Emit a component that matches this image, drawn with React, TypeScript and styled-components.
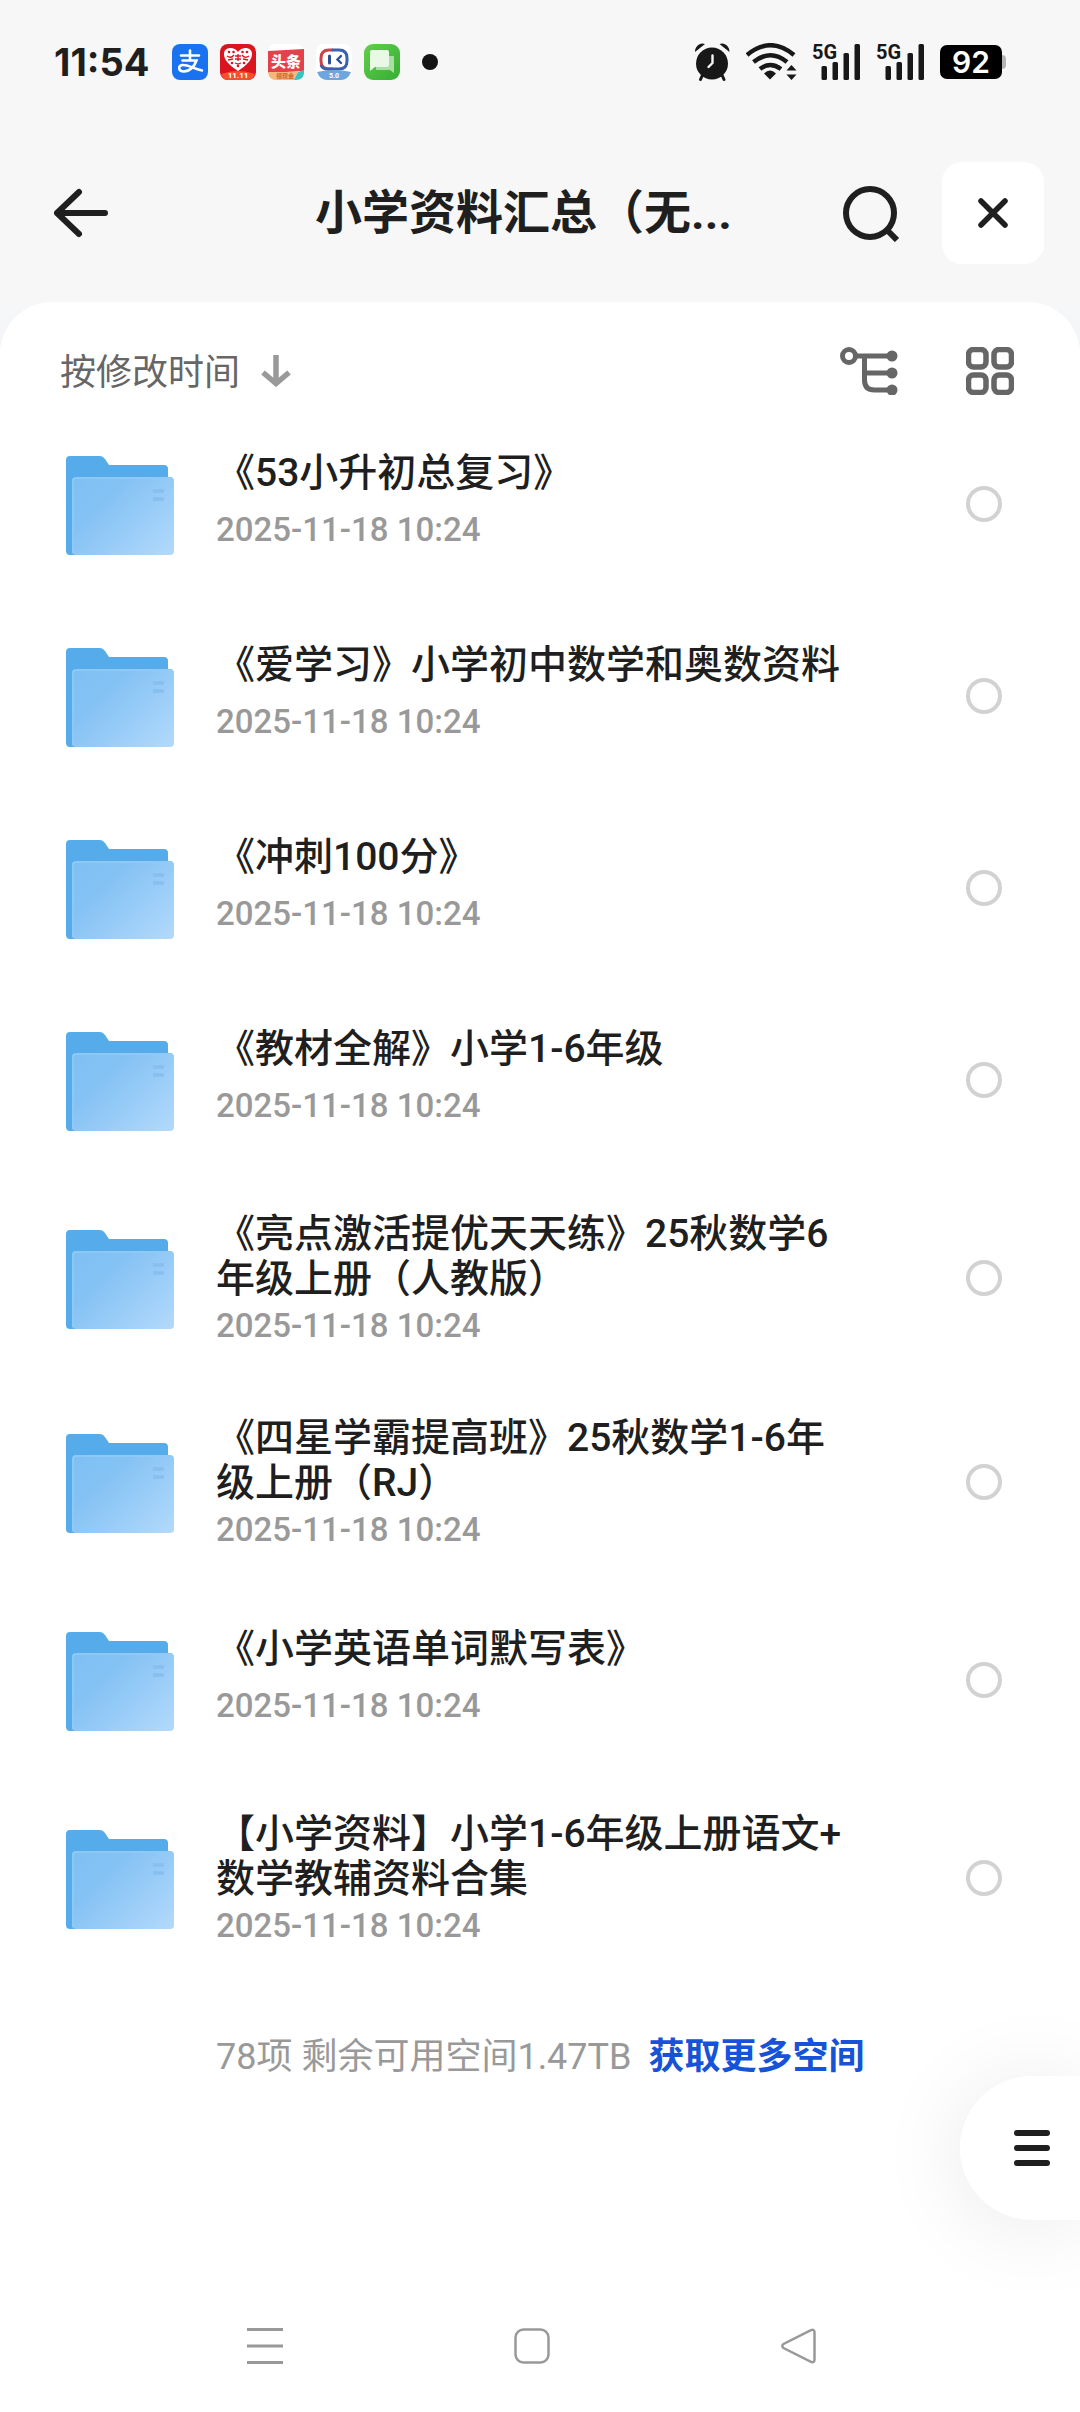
import React from "react";
import styled, { createGlobalStyle } from "styled-components";

const GlobalStyle = createGlobalStyle`
  *, *::before, *::after { box-sizing: border-box; }
  body {
    margin: 0;
    background: #ffffff;
    color: #1f1f1f;
    font-family: Roboto, "Noto Sans CJK SC", sans-serif;
  }
  button { border: 0; padding: 0; background: none; color: inherit; font: inherit; cursor: pointer; }
  svg { display: block; flex: none; }
`;

const Page = styled.div`
  min-height: 100vh;
  display: flex;
  flex-direction: column;
  background: #f7f7f7;
`;

const StatusBar = styled.div`
  height: 124px;
  padding: 0 74px 0 54px;
  display: flex;
  align-items: center;
  justify-content: space-between;
`;

const StatusGroup = styled.div<{ $gap: number }>`
  display: flex;
  align-items: center;
  gap: ${(p) => p.$gap}px;
`;

const Clock = styled.time`
  width: 106px;
  font: 700 38px/44px Inter, sans-serif;
`;

const Dot = styled.span`
  width: 16px;
  height: 16px;
  margin-left: 10px;
  border-radius: 50%;
  background: #141414;
`;

const Battery = styled.span`
  display: flex;
  align-items: center;
  &::after {
    content: "";
    width: 4px;
    height: 14px;
    border-radius: 0 4px 4px 0;
    background: #b4b4b4;
  }
`;

const BatteryLevel = styled.span`
  width: 62px;
  height: 34px;
  border-radius: 7px;
  background: #000000;
  color: #ffffff;
  text-align: center;
  font: 600 30px/34px Inter, sans-serif;
`;

const Header = styled.header`
  height: 178px;
  padding: 0 36px 0 54px;
  display: flex;
  align-items: center;
`;

const BackButton = styled.button`
  width: 150px;
  height: 102px;
  display: flex;
  align-items: center;
`;

const Title = styled.h1`
  flex: 1;
  min-width: 0;
  margin: 0;
  overflow: hidden;
  white-space: nowrap;
  text-align: center;
  font-size: 47px;
  line-height: 72px;
  font-weight: 700;
`;

const SearchButton = styled.button`
  width: 99px;
  height: 102px;
  display: flex;
  align-items: center;
`;

const CloseButton = styled.button`
  width: 102px;
  height: 102px;
  display: grid;
  place-items: center;
  border-radius: 20px;
  background: #ffffff;
`;

const PanelBackdrop = styled.div`
  flex: 1;
  display: flex;
  flex-direction: column;
  background: linear-gradient(#f6f7f8, #f2f4f7 48px);
`;

const Panel = styled.main`
  flex: 1;
  border-radius: 52px 52px 0 0;
  background: #ffffff;
`;

const Toolbar = styled.div`
  height: 106px;
  padding: 32px 66px 0 60px;
  display: flex;
  align-items: center;
  justify-content: space-between;
  color: #666666;
`;

const SortButton = styled.button`
  display: flex;
  align-items: center;
  gap: 20px;
  font-size: 36px;
  line-height: 54px;
`;

const SortText = styled.span`
  padding-top: 3px;
`;

const ViewActions = styled.div`
  display: flex;
  align-items: center;
  gap: 68px;
`;

const FileList = styled.ul`
  margin: 0;
  padding: 0;
  list-style: none;
`;

const FileRow = styled.li<{ $tall: boolean }>`
  min-height: ${(p) => (p.$tall ? 204 : 192)}px;
  padding: 0 78px 0 66px;
  display: flex;
  align-items: center;
  justify-content: space-between;
`;

const FileLabel = styled.label`
  display: flex;
  align-items: center;
  gap: 42px;
  cursor: pointer;
`;

const FileText = styled.span<{ $tall: boolean }>`
  max-width: 636px;
  padding: ${(p) => (p.$tall ? "6px 0 0" : "0 0 4px")};
  display: flex;
  flex-direction: column;
  gap: ${(p) => (p.$tall ? 0 : 10)}px;
`;

const FileName = styled.span`
  font-size: 39px;
  line-height: 45px;
  font-weight: 500;
  line-break: anywhere;
`;

const FileDate = styled.time`
  color: #999999;
  font-size: 33px;
  line-height: 48px;
  font-weight: 500;
`;

const Check = styled.input`
  appearance: none;
  flex: none;
  width: 36px;
  height: 36px;
  margin: 0;
  border: 4px solid #d2d2d2;
  border-radius: 50%;
  background: #ffffff;
  &:checked { border: 10px solid #1a56db; }
`;

const Summary = styled.p`
  margin: 0;
  padding: 50px 66px 0 216px;
  display: flex;
  gap: 17px;
  color: #999999;
  font-size: 36px;
  line-height: 54px;
`;

const MoreLink = styled.a`
  color: #1653d8;
  font-weight: 700;
  text-decoration: none;
`;

const FloatingMenu = styled.button`
  position: fixed;
  right: 0;
  bottom: 192px;
  width: 120px;
  height: 144px;
  padding-left: 54px;
  display: flex;
  align-items: center;
  border-radius: 72px 0 0 72px;
  background: #ffffff;
  box-shadow: 0 6px 90px rgba(0, 0, 0, 0.09);
`;

const SystemNav = styled.nav`
  height: 132px;
  padding: 0 263px 0 247px;
  display: flex;
  align-items: center;
  justify-content: space-between;
  background: #ffffff;
`;

const AppIcons = () => (
  <>
    <svg width="36" height="36" viewBox="0 0 36 36">
      <rect width="36" height="36" rx="8" fill="#1a72f0" />
      <path d="M9 11.500h18M18 6.500v10M10.500 16.500h14c-2 6-7 11-12.500 11-6 0-6.500-6.500-1-6.500 6 0 10 3.500 19 5.500" fill="none" stroke="#fff" strokeWidth="2.600" strokeLinecap="round" />
    </svg>
    <svg width="36" height="36" viewBox="0 0 36 36">
      <rect width="36" height="36" rx="8" fill="#dc1420" />
      <path d="M1 30q17-6 34 0-2 6-8 6H8q-6 0-7-6z" fill="#f4502c" />
      <path d="M18 27C9 21 4 16 4 10c0-7 10-8 14-2 4-6 14-5 14 2 0 6-5 11-14 17z" fill="#fff" />
      <g fill="#dc1420">
        <circle cx="9" cy="8" r="1.300" /><circle cx="13.500" cy="8" r="1.300" />
        <circle cx="22.500" cy="8" r="1.300" /><circle cx="27" cy="8" r="1.300" />
        <circle cx="12" cy="19" r="1.300" /><circle cx="24" cy="19" r="1.300" />
        <circle cx="18" cy="22" r="1.300" />
      </g>
      <path d="M7 12q4 3 7-1M22 11q3 4 7 1M15 12h6M15 15h6M18 10v7M8 16l5-1M28 16l-5-1M15 19l3 1 3-1" stroke="#dc1420" strokeWidth="1.300" fill="none" />
      <text x="18" y="34" textAnchor="middle" fill="#fff" fontFamily="Roboto, sans-serif" fontSize="8" fontWeight="700">11.11</text>
    </svg>
    <svg width="36" height="36" viewBox="0 0 36 36">
      <rect width="36" height="36" rx="8" fill="#fff" />
      <path d="M0 7l36-2v22l-36 2z" fill="#e5414a" />
      <path d="M0 28h30l-4 8H8q-7 0-8-8z" fill="#f6b77c" />
      <path d="M30 28l6-2q1 10-8 10h-2z" fill="#35c4c0" />
      <text x="18" y="23" textAnchor="middle" fill="#fff" fontFamily="Noto Sans CJK SC, sans-serif" fontSize="15" fontWeight="900">头条</text>
      <text x="17" y="34" textAnchor="middle" fill="#d2622e" fontFamily="Noto Sans CJK SC, sans-serif" fontSize="6" fontWeight="700">领现金</text>
    </svg>
    <svg width="36" height="36" viewBox="0 0 36 36">
      <rect width="36" height="36" rx="8" fill="#fff" />
      <path d="M17 6h-4q-8 0-8 8v3q0 8 8 8h4" fill="none" stroke="#c9434b" strokeWidth="3" />
      <path d="M16 6h7q8 0 8 8v3q0 8-8 8H11q-5 0-6-4" fill="none" stroke="#3b62ad" strokeWidth="3" />
      <path d="M13.500 12v7" stroke="#2d4f96" strokeWidth="3" strokeLinecap="round" />
      <path d="M25 12l-3.500 3.500 3.500 3.500" fill="none" stroke="#2d4f96" strokeWidth="2.400" strokeLinecap="round" />
      <path d="M1 28q17-4 34 0-3 8-10 8H11q-7 0-10-8z" fill="#6fa5df" />
      <text x="18" y="34" textAnchor="middle" fill="#fff" fontFamily="Roboto, sans-serif" fontSize="7" fontWeight="700">5.0</text>
    </svg>
    <svg width="36" height="36" viewBox="0 0 36 36">
      <defs>
        <linearGradient id="chatGreen" x1="0" y1="0" x2="1" y2="1">
          <stop offset="0" stopColor="#62ce4a" />
          <stop offset="1" stopColor="#35ae35" />
        </linearGradient>
      </defs>
      <rect width="36" height="36" rx="9" fill="url(#chatGreen)" />
      <path d="M12 12h18v17l-4-3H12z" fill="#a9dfa3" />
      <path d="M8 6h15q2 0 2 2v13q0 2-2 2H11l-5 4V8q0-2 2-2z" fill="#eaf8e8" />
    </svg>
  </>
);

const AlarmIcon = () => (
  <svg width="37" height="38" viewBox="0 0 37 38" fill="none" stroke="#181818" strokeLinecap="round">
    <path d="M8.500 32l-2 4.500M28 32l2 4.500" strokeWidth="3" />
    <circle cx="18" cy="20.500" r="16" fill="#181818" stroke="none" />
    <path d="M1 9C1 3 6-1 11 1zM35.500 9C35.500 3 30.500-1 25.500 1z" fill="#181818" stroke="none" />
    <path d="M18.500 12.500v7.500l-4 4" stroke="#f7f7f7" strokeWidth="2.400" strokeLinejoin="round" />
  </svg>
);

const WifiIcon = () => (
  <svg width="51" height="38" viewBox="0 0 51 38" fill="none" stroke="#181818" strokeWidth="4.500">
    <path d="M1 12q23.500-19.500 47 0M7.500 19q17-13.500 33.500 0M14 26q10-8 21 0" />
    <path d="M18 30.500q6-6 12 0l-6 6z" fill="#181818" stroke="none" />
    <path d="M45.500 22l5 5.500h-10zM45.500 37l5-5.500h-10z" fill="#181818" stroke="none" />
  </svg>
);

const SignalIcon = () => (
  <svg width="49" height="54" viewBox="0 -8 49 54" fill="#181818">
    <text x="0" y="16" fontFamily="Liberation Sans Narrow, Roboto, sans-serif" fontSize="20" fontWeight="700">5G</text>
    <rect x="9.500" y="23" width="5.500" height="14" rx="1.500" />
    <rect x="20.500" y="19" width="5.500" height="18" rx="1.500" />
    <rect x="31.500" y="10" width="5.500" height="27" rx="1.500" />
    <rect x="42.500" y="1" width="5.500" height="36" rx="1.500" />
  </svg>
);

const BackIcon = () => (
  <svg width="54" height="50" viewBox="0 0 54 50" fill="none" stroke="#1f1f1f" strokeWidth="6" strokeLinecap="round" strokeLinejoin="round">
    <path d="M51 25H3M25 4L3 25l22 21" />
  </svg>
);

const SearchIcon = () => (
  <svg width="57" height="57" viewBox="0 0 57 57" fill="none" stroke="#1f1f1f" strokeWidth="6">
    <circle cx="27" cy="28" r="24" />
    <path d="M43.500 44.500l10.500 10.500" />
  </svg>
);

const CloseIcon = () => (
  <svg width="32" height="32" viewBox="0 0 32 32" stroke="#1f1f1f" strokeWidth="5.500" strokeLinecap="round">
    <path d="M4 4l24 24M28 4L4 28" />
  </svg>
);

const SortDownIcon = () => (
  <svg width="32" height="32" viewBox="0 0 32 32" fill="none" stroke="#999999" strokeWidth="5.500">
    <path d="M16 0v28M3 17.500l13 11 13-11" />
  </svg>
);

const TreeIcon = () => (
  <svg width="58" height="48" viewBox="0 0 58 48" fill="none" stroke="#666666" strokeWidth="5">
    <circle cx="9" cy="9" r="6.500" />
    <path d="M17 9h35M24.500 9v24q0 10 10 10H52M24.500 26H52" />
    <g fill="#666666" stroke="none">
      <circle cx="52" cy="9" r="5.500" />
      <circle cx="52" cy="26" r="5.500" />
      <circle cx="52" cy="43" r="5.500" />
    </g>
  </svg>
);

const GridIcon = () => (
  <svg width="48" height="48" viewBox="0 0 48 48" fill="none" stroke="#666666" strokeWidth="5.500">
    <rect x="2.500" y="2.500" width="17.500" height="17.500" rx="5" />
    <rect x="28" y="2.500" width="17.500" height="17.500" rx="5" />
    <rect x="2.500" y="28" width="17.500" height="17.500" rx="5" />
    <rect x="28" y="28" width="17.500" height="17.500" rx="5" />
  </svg>
);

const FolderIcon = () => (
  <svg width="108" height="102" viewBox="0 0 108 102" aria-hidden="true">
    <defs>
      <linearGradient id="folderFront" x1="0" y1="0.100" x2="1" y2="0.900">
        <stop offset="0" stopColor="#7fc0f3" />
        <stop offset="0.300" stopColor="#84c2f4" />
        <stop offset="1" stopColor="#b0d8fb" />
      </linearGradient>
    </defs>
    <path d="M0 7q0-4 4-4h30q3 0 5 3l4 6h55q4 0 4 4v20H12v66H4q-4 0-4-4z" fill="#56abea" />
    <rect x="6" y="24" width="102" height="78" rx="4" fill="url(#folderFront)" />
    <path d="M7 100V28q0-3 3-3h95" fill="none" stroke="#93caf6" strokeWidth="1.500" />
    <path d="M87 38h11M87 46h11" stroke="#88bfee" strokeWidth="3.500" />
  </svg>
);

const MenuIcon = () => (
  <svg width="36" height="36" viewBox="0 0 36 36" stroke="#1f1f1f" strokeWidth="6" strokeLinecap="round">
    <path d="M3 3h30M3 18h30M3 33h30" />
  </svg>
);

const RecentsIcon = () => (
  <svg width="36" height="36" viewBox="0 0 36 36" stroke="#999999" strokeWidth="3">
    <path d="M0 1.500h36M0 18h36M0 34.500h36" />
  </svg>
);

const HomeIcon = () => (
  <svg width="36" height="36" viewBox="0 0 36 36" fill="none" stroke="#999999" strokeWidth="2.500">
    <rect x="1.500" y="1.500" width="33" height="33" rx="8" />
  </svg>
);

const NavBackIcon = () => (
  <svg width="36" height="36" viewBox="0 0 36 36" fill="none" stroke="#999999" strokeWidth="2.500">
    <path d="M29.500 2.300L2.500 16q-2.500 2 0 4l27 13.700q4 1.500 4-2V4.300q0-3.500-4-2z" />
  </svg>
);

const DATE = "2025-11-18 10:24";

const files: { name: string; tall?: boolean }[] = [
  { name: "《53小升初总复习》" },
  { name: "《爱学习》小学初中数学和奥数资料" },
  { name: "《冲刺100分》" },
  { name: "《教材全解》小学1-6年级" },
  { name: "《亮点激活提优天天练》25秋数学6年级上册（人教版）", tall: true },
  { name: "《四星学霸提高班》25秋数学1-6年级上册（RJ）", tall: true },
  { name: "《小学英语单词默写表》" },
  { name: "【小学资料】小学1-6年级上册语文+数学教辅资料合集", tall: true },
];

export default function App() {
  return (
    <Page>
      <GlobalStyle />
      <StatusBar>
        <StatusGroup $gap={12}>
          <Clock>11:54</Clock>
          <AppIcons />
          <Dot />
        </StatusGroup>
        <StatusGroup $gap={15}>
          <AlarmIcon />
          <WifiIcon />
          <SignalIcon />
          <SignalIcon />
          <Battery>
            <BatteryLevel>92</BatteryLevel>
          </Battery>
        </StatusGroup>
      </StatusBar>
      <Header>
        <BackButton aria-label="返回"><BackIcon /></BackButton>
        <Title>小学资料汇总（无...</Title>
        <SearchButton aria-label="搜索"><SearchIcon /></SearchButton>
        <CloseButton aria-label="关闭"><CloseIcon /></CloseButton>
      </Header>
      <PanelBackdrop>
        <Panel>
          <Toolbar>
            <SortButton>
              <SortText>按修改时间</SortText>
              <SortDownIcon />
            </SortButton>
            <ViewActions>
              <button aria-label="目录树"><TreeIcon /></button>
              <button aria-label="网格视图"><GridIcon /></button>
            </ViewActions>
          </Toolbar>
          <FileList>
            {files.map((file, i) => (
              <FileRow key={file.name} $tall={!!file.tall}>
                <FileLabel htmlFor={`file-${i}`}>
                  <FolderIcon />
                  <FileText $tall={!!file.tall}>
                    <FileName>{file.name}</FileName>
                    <FileDate>{DATE}</FileDate>
                  </FileText>
                </FileLabel>
                <Check type="checkbox" id={`file-${i}`} />
              </FileRow>
            ))}
          </FileList>
          <Summary>
            <span>78项 剩余可用空间1.47TB</span>
            <MoreLink href="#space">获取更多空间</MoreLink>
          </Summary>
        </Panel>
      </PanelBackdrop>
      <SystemNav>
        <button aria-label="最近任务"><RecentsIcon /></button>
        <button aria-label="主屏幕"><HomeIcon /></button>
        <button aria-label="后退"><NavBackIcon /></button>
      </SystemNav>
      <FloatingMenu aria-label="菜单"><MenuIcon /></FloatingMenu>
    </Page>
  );
}
